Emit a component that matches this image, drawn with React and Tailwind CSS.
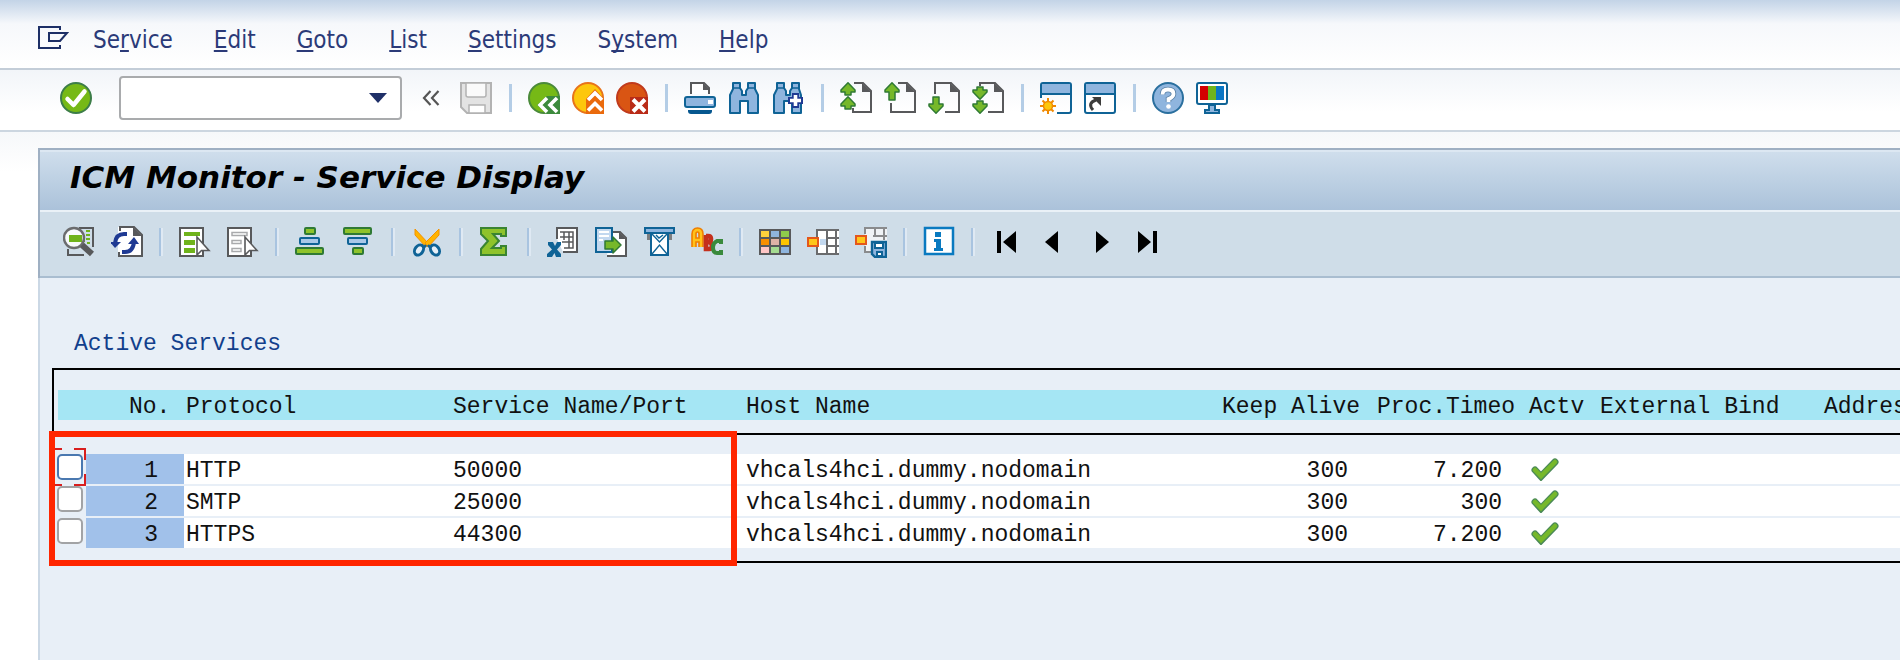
import React from "react";

const Svg = ({ children, w = 32, h = 32 }) => (
  <svg width={w} height={h} viewBox={`0 0 ${w} ${h}`} fill="none" aria-hidden="true" className="block shrink-0">
    {children}
  </svg>
);

const UP = "M8 0.8 L15 8 V10 H11 V13 H5 V10 H1 V8 Z";
const DOWN = "M8 13.2 L15 6 V4 H11 V1 H5 V4 H1 V6 Z";
const green = { fill: "#76b82a", stroke: "#2f7a34", strokeWidth: 1.5, strokeLinejoin: "round" };

const PageOutline = ({ d }) => (
  <>
    <path d={d} stroke="#58595b" strokeWidth="2" />
    <path d="M22 1 L31 10 H22 Z" fill="#58595b" />
  </>
);

const icons = {
  ok: (
    <Svg>
      <circle cx="16" cy="16" r="15" fill="#76b916" stroke="#3c7d48" strokeWidth="2" />
      <path d="M7.5 17 L13.5 23 L24.5 9.5" stroke="#fff" strokeWidth="4.5" strokeLinecap="round" strokeLinejoin="round" />
    </Svg>
  ),
  collapse: (
    <Svg w={20} h={18}>
      <path d="M9.5 2 L3 9 L9.5 16 M17.5 2 L11 9 L17.5 16" stroke="#555" strokeWidth="2.2" />
    </Svg>
  ),
  save: (
    <Svg>
      <path d="M1 1 H31 V31 H7 L1 25 Z" fill="#e3e3e3" stroke="#b3b3b3" strokeWidth="2" />
      <path d="M6 1 H26 V13 Q26 15 24 15 H8 Q6 15 6 13 Z" fill="#fafafa" stroke="#b3b3b3" strokeWidth="1.5" />
      <path d="M9 31 V23 H25 V31 Z" fill="#fff" stroke="#b3b3b3" strokeWidth="1.5" />
    </Svg>
  ),
  back: (
    <Svg>
      <circle cx="16" cy="16" r="15" fill="#76b916" stroke="#4a8a3a" strokeWidth="2" />
      <path d="M9 23 L19 14 H32 V32 H19 Z" fill="#3c8a3c" />
      <path d="M19 16 L12 23 L19 30 M29 16 L22 23 L29 30" stroke="#fff" strokeWidth="3.6" />
    </Svg>
  ),
  exit: (
    <Svg>
      <circle cx="16" cy="16" r="15" fill="#fdc70c" stroke="#e8731a" strokeWidth="2" />
      <path d="M14 17 L23 7 L32 17 V32 H14 Z" fill="#ea6a0c" />
      <path d="M16 18 L23 11 L30 18 M16 28.5 L23 21.5 L30 28.5" stroke="#fff" strokeWidth="3.6" />
    </Svg>
  ),
  cancel: (
    <Svg>
      <circle cx="16" cy="16" r="15" fill="#d95513" stroke="#c03a1c" strokeWidth="2" />
      <path d="M14 15 H32 V32 H14 Z" fill="#b92b17" />
      <path d="M17 17.5 L29 29.5 M29 17.5 L17 29.5" stroke="#fff" strokeWidth="4" />
    </Svg>
  ),
  print: (
    <Svg>
      <path d="M7 12 V1 H20 L25 6 V12" fill="#fff" stroke="#58595b" strokeWidth="2" />
      <path d="M19 1 L26 8 H19 Z" fill="#58595b" />
      <rect x="1" y="15" width="30" height="10" rx="2" fill="#8fb5de" stroke="#0f6396" strokeWidth="2" />
      <rect x="24" y="18" width="5" height="4" fill="#fff" />
      <path d="M4 28 H28 V29 Q28 32 25 32 H7 Q4 32 4 29 Z" fill="#06578f" />
    </Svg>
  ),
  find: (
    <Svg>
      <path d="M5 1 H12 V6 L14 9 V13 H18 V9 L20 6 V1 H27 V7 L30 13 V31 H20 V19 H12 V31 H2 V13 L5 7 Z" fill="#8fb5de" stroke="#0f6396" strokeWidth="2" strokeLinejoin="round" />
      <path d="M5 6 H12 M20 6 H27" stroke="#0f6396" strokeWidth="1.5" />
    </Svg>
  ),
  findNext: (
    <Svg>
      <path d="M5 1 H12 V6 L14 9 V13 H18 V9 L20 6 V1 H27 V7 L29 13 V31 H20 V19 H12 V31 H2 V13 L5 7 Z" fill="#8fb5de" stroke="#0f6396" strokeWidth="2" strokeLinejoin="round" />
      <path d="M5 6 H12 M20 6 H27" stroke="#0f6396" strokeWidth="1.5" />
      <path d="M20 11 H27 V15 H31 V22 H27 V26 H20 V22 H16 V15 H20 Z" fill="#1f3a93" />
      <path d="M23.5 13 V24 M18 18.5 H29" stroke="#fff" strokeWidth="3.6" />
    </Svg>
  ),
  firstPage: (
    <Svg>
      <PageOutline d="M14 1 H23 L31 9 V30 H13 V26" />
      <path d={UP} {...green} />
      <path d={UP} transform="translate(0 14)" {...green} />
    </Svg>
  ),
  prevPage: (
    <Svg>
      <PageOutline d="M14 1 H23 L31 9 V30 H7 V21" />
      <path d="M8 0.8 L15 8 V10 H11 V18 H5 V10 H1 V8 Z" {...green} />
    </Svg>
  ),
  nextPage: (
    <Svg>
      <PageOutline d="M7 12 V1 H23 L31 9 V30 H17" />
      <path d="M8 31.2 L15 24 V22 H11 V15 H5 V22 H1 V24 Z" {...green} />
    </Svg>
  ),
  lastPage: (
    <Svg>
      <PageOutline d="M8 4 V1 H23 L31 9 V30 H16" />
      <path d={DOWN} transform="translate(0 4)" {...green} />
      <path d={DOWN} transform="translate(0 18)" {...green} />
    </Svg>
  ),
  newSession: (
    <Svg>
      <path d="M1 16 V3 Q1 1 3 1 H29 Q31 1 31 3 V29 Q31 31 29 31 H17" stroke="#0f6396" strokeWidth="2" />
      <path d="M2 2 H30 V11 H2 Z" fill="#8fb5de" />
      <path d="M1 12 H31" stroke="#0f6396" strokeWidth="2" />
      <path d="M8 16 V32 M0 24 H16 M2.5 18.5 L13.5 29.5 M13.5 18.5 L2.5 29.5" stroke="#f08a00" strokeWidth="2" />
      <circle cx="8" cy="24" r="4.5" fill="#fdc70c" stroke="#f08a00" strokeWidth="1.5" />
    </Svg>
  ),
  shortcut: (
    <Svg>
      <rect x="1" y="1" width="30" height="30" rx="2" fill="#fff" stroke="#0f6396" strokeWidth="2" />
      <path d="M2 2 H30 V11 H2 Z" fill="#8fb5de" />
      <path d="M1 12 H31" stroke="#0f6396" strokeWidth="2" />
      <path d="M9 28 Q3 21 12 18" stroke="#3c3c3b" strokeWidth="3" />
      <path d="M8 15 H17 V24 Z" fill="#3c3c3b" />
    </Svg>
  ),
  help: (
    <Svg>
      <circle cx="16" cy="16" r="15" fill="#8fb5de" stroke="#2a6f9e" strokeWidth="2" />
      <path d="M10.5 12.5 Q10.5 7.5 16 7.5 Q21.5 7.5 21.5 12 Q21.5 15 16.5 17 V20" stroke="#5b83a8" strokeWidth="5.5" />
      <path d="M10.5 12.5 Q10.5 7.5 16 7.5 Q21.5 7.5 21.5 12 Q21.5 15 16.5 17 V20" stroke="#fff" strokeWidth="3.8" />
      <circle cx="16.5" cy="24.5" r="2.3" fill="#fff" />
    </Svg>
  ),
  layout: (
    <Svg>
      <rect x="1" y="1" width="30" height="21" rx="2" fill="#fff" stroke="#0f6396" strokeWidth="2" />
      <path d="M4 4 H12 V18 H4 Z" fill="#d40000" />
      <path d="M12 4 H20 V18 H12 Z" fill="#6fb31b" />
      <path d="M20 4 H28 V18 H20 Z" fill="#0a76c4" />
      <path d="M13 23 H19 V28 H23 V31 H9 V28 H13 Z" fill="#8fb5de" stroke="#0f6396" strokeWidth="2" />
    </Svg>
  ),
  detail: (
    <Svg>
      <path d="M16 2 H30 V21 M5 23 V29 H21" stroke="#58595b" strokeWidth="2" />
      <path d="M6 9 H22 V16 H6 Z" fill="#6fb31b" />
      <path d="M23 5 H27 M23 9 H27 M23 13 H27 M24 17 H27" stroke="#6fb31b" strokeWidth="2" />
      <circle cx="11" cy="12" r="10" fill="#fff" fillOpacity="0.85" stroke="#6b6c6e" strokeWidth="2.4" />
      <path d="M6 9 H19 V16 H6 Z" fill="#6fb31b" />
      <path d="M19 19 L29 28" stroke="#58595b" strokeWidth="6" />
    </Svg>
  ),
  refresh: (
    <Svg>
      <path d="M7 8 V1 H22 L31 9 V30 H7 V24" fill="#fff" />
      <path d="M9 5 V1 H23 L31 9 V30 H8 V26" stroke="#58595b" strokeWidth="2" />
      <path d="M22 1 L31 10 H22 Z" fill="#58595b" />
      <path d="M4 17 Q5 8 13 8 H16" stroke="#1f3a93" strokeWidth="4" />
      <path d="M-1 16 H10 L4 22 Z" fill="#1f3a93" />
      <path d="M23 16 Q22 26 14 26 H11" stroke="#1f3a93" strokeWidth="4" />
      <path d="M17 18 H28 L23 11 Z" fill="#1f3a93" />
    </Svg>
  ),
  selectAll: (
    <Svg>
      <path d="M1 2 H24 V30 H1 Z" fill="#fff" stroke="#58595b" strokeWidth="2" />
      <path d="M5 6 H21 V10 H5 Z M5 14 H16 V19 H5 Z M5 22 H16 V27 H5 Z" fill="#6fb31b" />
      <path d="M18 11 V29 L22.5 24.5 H30 Z" fill="#fff" stroke="#58595b" strokeWidth="1.6" />
    </Svg>
  ),
  deselectAll: (
    <Svg>
      <path d="M1 2 H24 V30 H1 Z" fill="#fff" stroke="#58595b" strokeWidth="2" />
      <path d="M5 6.5 H20 V9.5 H5 Z M5 14.5 H14 V17.5 H5 Z M5 22.5 H14 V25.5 H5 Z" fill="#fff" stroke="#a9aaac" strokeWidth="1.5" />
      <path d="M18 11 V29 L22.5 24.5 H30 Z" fill="#fff" stroke="#58595b" strokeWidth="1.6" />
    </Svg>
  ),
  sortAsc: (
    <Svg>
      <rect x="10" y="2" width="10" height="6" rx="1" fill="#8fc32b" stroke="#2f7a34" strokeWidth="2" />
      <rect x="5" y="12" width="19" height="6" rx="1" fill="#a9c8e8" stroke="#0f6396" strokeWidth="2" />
      <rect x="1" y="22" width="27" height="6" rx="1" fill="#8fc32b" stroke="#2f7a34" strokeWidth="2" />
    </Svg>
  ),
  sortDesc: (
    <Svg>
      <rect x="1" y="2" width="27" height="6" rx="1" fill="#8fc32b" stroke="#2f7a34" strokeWidth="2" />
      <rect x="5" y="12" width="19" height="6" rx="1" fill="#a9c8e8" stroke="#0f6396" strokeWidth="2" />
      <rect x="10" y="22" width="10" height="6" rx="1" fill="#8fc32b" stroke="#2f7a34" strokeWidth="2" />
    </Svg>
  ),
  cut: (
    <Svg>
      <path d="M4 3 V9 L15 21 L17 17 Z" fill="#ffb400" stroke="#f39200" />
      <path d="M28 3 V9 L17 21 L14 17 Z" fill="#ffb400" stroke="#f39200" />
      <path d="M15 19 L11 24 M17 19 L21 24" stroke="#0f6396" strokeWidth="2.5" />
      <ellipse cx="8" cy="24" rx="4" ry="5.5" transform="rotate(35 8 24)" fill="#e6eff7" stroke="#0f6396" strokeWidth="3" />
      <ellipse cx="24" cy="24" rx="4" ry="5.5" transform="rotate(-35 24 24)" fill="#e6eff7" stroke="#0f6396" strokeWidth="3" />
    </Svg>
  ),
  sum: (
    <Svg>
      <path d="M2 2 H27 V10 H22 V8 H14 L20 15 L13 22 H22 V20 H27 V29 H2 V23 L9 15 L2 8 Z" fill="#8fc32b" stroke="#3a8431" strokeWidth="2" />
    </Svg>
  ),
  excel: (
    <Svg>
      <path d="M10 13 V2 H30 V26 H16" fill="#fff" stroke="#58595b" strokeWidth="2" />
      <path d="M13 6 H26 V22 H17 M13 11 H26 M15 16 H26 M17 6 V14 M22 6 V22" stroke="#58595b" strokeWidth="1.5" />
      <path d="M1 16 H6 L8 20 L10 16 H14 V19 L10 23.5 L14 28 V31 H9 L7.5 27 L5 31 H0 V28 L5 23.5 L1 19 Z" fill="#0f6396" />
    </Svg>
  ),
  exportFile: (
    <Svg>
      <path d="M14 6 H25 L31 12 V30 H12" fill="#fff" stroke="#58595b" strokeWidth="2" />
      <path d="M24 6 L31 13 H24 Z" fill="#58595b" />
      <path d="M1 2 H17 V26 H1 Z" fill="#c2d8ef" stroke="#0f6396" strokeWidth="2" />
      <path d="M4 6 H14 M4 10 H14 M4 14 H8" stroke="#fff" strokeWidth="2" />
      <path d="M10 15 H18 V11 L26 19 L18 27 V23 H10 Z" {...green} />
    </Svg>
  ),
  filter: (
    <Svg>
      <path d="M2 2 H31 V7 H2 Z" fill="#8fb5de" stroke="#0f6396" strokeWidth="2" />
      <path d="M4 8 H8 V14 H4 Z M25 8 H29 V14 H25 Z" fill="#7d7e80" />
      <path d="M8 7 H25 V29 H8 Z" fill="#fff" stroke="#0f6396" strokeWidth="2" />
      <path d="M9 8 L16.5 16 L24 8 M9 28 L16.5 19 L24 28 M13 9 L16 12 L20 9" stroke="#0f6396" strokeWidth="1.4" />
    </Svg>
  ),
  abc: (
    <Svg>
      <path d="M3 21 V8 Q3 4 6.500 4 Q10 4 10 8 V21 M3 14 H10" stroke="#ef7d00" strokeWidth="5.6" />
      <path d="M15 10 H17 Q20 10 20 13 Q20 16 17 16 Q21 16 21 20 Q21 23 18 23 H15 V9" stroke="#c4301c" strokeWidth="4.6" />
      <path d="M3 21 V8 Q3 4 6.500 4 Q10 4 10 8 V21 M3 14 H10" stroke="#ffc21a" strokeWidth="2.4" />
      <path d="M30 18 V15 H26 Q22 17 22 21 Q22 27 26 27 H30 V24" stroke="#3a8a3c" strokeWidth="4" />
    </Svg>
  ),
  grid: (
    <Svg>
      <path d="M0 3 H32 V29 H0 Z" fill="#58595b" />
      <path d="M2 5 H10 V11 H2 Z" fill="#ffd23c" />
      <path d="M12 5 H20 V11 H12 Z" fill="#8fb5de" />
      <path d="M22 5 H30 V11 H22 Z" fill="#8fcb4b" />
      <path d="M2 13 H10 V19 H2 Z" fill="#f88f00" />
      <path d="M12 13 H20 V19 H12 Z" fill="#dfb2a6" />
      <path d="M22 13 H30 V19 H22 Z" fill="#ffc400" />
      <path d="M2 21 H10 V27 H2 Z" fill="#ffc6c6" />
      <path d="M12 21 H20 V27 H12 Z" fill="#a5db91" />
      <path d="M22 21 H30 V27 H22 Z" fill="#8fb5de" />
    </Svg>
  ),
  changeLayout: (
    <Svg>
      <path d="M10 4 H32 V28 H10 Z" fill="#fff" />
      <path d="M10 11 V4 H32 M32 12 H20 M32 20 H20 M10 21 V28 H32 M20 4 V28 M29 4 V28" stroke="#6a6b6d" strokeWidth="2" />
      <path d="M13 13 H19 V19 H13 Z" fill="#c2d8ef" />
      <path d="M1 12 H11 V20 H1 Z" fill="#ffc61a" stroke="#e4571b" strokeWidth="2" />
    </Svg>
  ),
  saveLayout: (
    <Svg>
      <path d="M10 2 H32 V16 H16 V26 H10 Z" fill="#f0f3f6" />
      <path d="M10 8 V2 H32 M32 10 H18 M10 20 V26 H16 M20 2 V10 M29 2 V14" stroke="#8a8b8d" strokeWidth="2" />
      <path d="M1 10 H11 V18 H1 Z" fill="#ffc61a" stroke="#e4571b" strokeWidth="2" />
      <path d="M17 16 H31 V31 H20 L17 28 Z" fill="#8fb5de" stroke="#0f6396" strokeWidth="2.4" />
      <path d="M20 17 H28 V22 H20 Z M22 26 H27 V30 H22 Z" fill="#fff" stroke="#0f6396" strokeWidth="2" />
    </Svg>
  ),
  info: (
    <Svg>
      <path d="M2 2 H30 V28 H2 Z" fill="#fff" stroke="#0a7ac0" strokeWidth="2.5" />
      <path d="M12 6 H18 V11 H12 Z M11 13 H18 V22 H20 V25 H11 V22 H13 V16 H11 Z" fill="#0a7ac0" />
    </Svg>
  ),
  first: (
    <Svg>
      <path d="M6 5 H10 V27 H6 Z M25 5 V27 L12 16 Z" fill="#000" />
    </Svg>
  ),
  prev: (
    <Svg>
      <path d="M23 5 V27 L10 16 Z" fill="#000" />
    </Svg>
  ),
  next: (
    <Svg>
      <path d="M9 5 V27 L22 16 Z" fill="#000" />
    </Svg>
  ),
  last: (
    <Svg>
      <path d="M7 5 V27 L20 16 Z M22 5 H26 V27 H22 Z" fill="#000" />
    </Svg>
  ),
};

const IconButton = ({ icon, label }) => (
  <button type="button" aria-label={label} className="flex h-8 w-8 shrink-0 items-center justify-center">
    {icons[icon]}
  </button>
);

const menus = [
  ["Se", "r", "vice"],
  ["", "E", "dit"],
  ["", "G", "oto"],
  ["", "L", "ist"],
  ["", "S", "ettings"],
  ["S", "y", "stem"],
  ["", "H", "elp"],
];

const systemGroups = [
  [["back", "Back"], ["exit", "Exit"], ["cancel", "Cancel"]],
  [["print", "Print"], ["find", "Find"], ["findNext", "Find next"]],
  [["firstPage", "First page"], ["prevPage", "Previous page"], ["nextPage", "Next page"], ["lastPage", "Last page"]],
  [["newSession", "New session"], ["shortcut", "Create shortcut"]],
  [["help", "Help"], ["layout", "Customize local layout"]],
];

const appGroups = [
  [["detail", "Details"], ["refresh", "Refresh"]],
  [["selectAll", "Select all"], ["deselectAll", "Deselect all"]],
  [["sortAsc", "Sort ascending"], ["sortDesc", "Sort descending"]],
  [["cut", "Cut"]],
  [["sum", "Total"]],
  [["excel", "Spreadsheet"], ["exportFile", "Export to file"], ["filter", "Set filter"], ["abc", "ABC analysis"]],
  [["grid", "Choose layout"], ["changeLayout", "Change layout"], ["saveLayout", "Save layout"]],
  [["info", "Information"]],
];

const services = [
  { no: 1, protocol: "HTTP", port: "50000", host: "vhcals4hci.dummy.nodomain", keep: "300", proc: "7.200" },
  { no: 2, protocol: "SMTP", port: "25000", host: "vhcals4hci.dummy.nodomain", keep: "300", proc: "300" },
  { no: 3, protocol: "HTTPS", port: "44300", host: "vhcals4hci.dummy.nodomain", keep: "300", proc: "7.200" },
];

const MenuBar = () => (
  <nav className="flex h-[70px] items-center border-b-2 border-[#c3cdd8] bg-linear-to-b from-[#c3d4e7] via-[#f6f8fb] via-35% to-white pt-3 pl-[38px]">
    <button type="button" aria-label="System menu" className="mr-6 mb-1">
      <Svg w={31} h={24}>
        <path d="M22 4 V1 H1 V22 H22 V19" stroke="#1d2f66" strokeWidth="2" />
        <path d="M11 7 H29 L22 15 H11 Z" stroke="#1d2f66" strokeWidth="2" />
      </Svg>
    </button>
    <ul className="flex gap-[41px] text-[24px] leading-8 text-[#2b3a78]">
      {menus.map(([before, key, after]) => (
        <li key={before + key + after}>
          <button type="button">
            {before}
            <span className="underline decoration-2 underline-offset-2 [text-decoration-skip-ink:none]">{key}</span>
            {after}
          </button>
        </li>
      ))}
    </ul>
  </nav>
);

const SystemBar = () => (
  <div className="flex h-[62px] items-center gap-3 border-b-2 border-[#ccd6e0] bg-linear-to-b from-[#f2f5f9] to-white to-70% pb-1 pl-[60px]">
    <IconButton icon="ok" label="Enter" />
    <div className="ml-[15px] flex h-[44px] w-[283px] items-center rounded-[4px] border-2 border-[#a9abad] bg-white pr-2">
      <input type="text" aria-label="Command" className="h-full min-w-0 flex-1 px-2 text-[24px] outline-none" />
      <button type="button" aria-label="Command history" className="flex h-6 w-7 items-center justify-center">
        <Svg w={18} h={10}>
          <path d="M0 0 H18 L9 10 Z" fill="#1f3068" />
        </Svg>
      </button>
    </div>
    <button type="button" aria-label="Hide command field" className="flex h-8 w-[34px] items-center justify-center">
      {icons.collapse}
    </button>
    <IconButton icon="save" label="Save" />
    {systemGroups.map((group) => (
      <React.Fragment key={group[0][0]}>
        <span className="flex w-3 justify-center">
          <span className="h-7 w-[3px] bg-[#b4cde6]" />
        </span>
        {group.map(([icon, label]) => (
          <IconButton key={icon} icon={icon} label={label} />
        ))}
      </React.Fragment>
    ))}
  </div>
);

const AppBar = () => (
  <div className="flex h-[68px] items-center gap-4 border-t-2 border-b-2 border-t-[#eaf1f7] border-b-[#a9bdd0] bg-[#cfdde8] pb-1 pl-[23px]">
    {appGroups.map((group) => (
      <React.Fragment key={group[0][0]}>
        {group.map(([icon, label]) => (
          <IconButton key={icon} icon={icon} label={label} />
        ))}
        <span className="h-7 w-1 border-r-2 border-l-2 border-l-[#a9c4e0] border-r-[#dfe9f3]" />
      </React.Fragment>
    ))}
    <div className="flex gap-5">
      <div className="flex gap-3">
        <IconButton icon="first" label="First column" />
        <IconButton icon="prev" label="Column left" />
      </div>
      <div className="flex gap-3">
        <IconButton icon="next" label="Column right" />
        <IconButton icon="last" label="Last column" />
      </div>
    </div>
  </div>
);

const Head = ({ children, label, className = "pl-[2px]" }) => (
  <th scope="col" aria-label={label} className="p-0 pt-5 pb-[13px] font-normal">
    <div className={`h-[30px] overflow-hidden bg-[#a5e6f4] text-left whitespace-nowrap ${className}`}>{children}</div>
  </th>
);

const Cell = ({ children, className = "bg-white pl-[2px]" }) => (
  <td className="p-0">
    <div className={`mb-[2px] h-[30px] whitespace-nowrap ${className}`}>{children}</div>
  </td>
);

const ServiceTable = () => (
  <div className="relative ml-[12px] border-y-2 border-l-2 border-black pb-[11px]">
    <table className="w-full table-fixed border-collapse font-['Liberation_Mono',monospace] text-[23px] leading-[34px] text-[#111]">
      <colgroup>
        <col className="w-[32px]" />
        <col className="w-[98px]" />
        <col className="w-[267px]" />
        <col className="w-[293px]" />
        <col className="w-[476px]" />
        <col className="w-[155px]" />
        <col className="w-[152px]" />
        <col className="w-[71px]" />
        <col className="w-[224px]" />
        <col />
      </colgroup>
      <thead className="border-b-2 border-black">
        <tr>
          <Head label="Select" className="ml-1" />
          <Head className="pl-[43px]">No.</Head>
          <Head>Protocol</Head>
          <Head>Service Name/Port</Head>
          <Head>Host Name</Head>
          <Head>Keep Alive</Head>
          <Head>Proc.Timeo</Head>
          <Head>Actv</Head>
          <Head>External Bind</Head>
          <Head>Address</Head>
        </tr>
      </thead>
      <tbody>
        <tr aria-hidden="true">
          <td colSpan={10} className="h-5 p-0" />
        </tr>
        {services.map((s, i) => (
          <tr key={s.no}>
            <Cell className="relative">
              <input
                type="checkbox"
                aria-label={`Select service ${s.no}`}
                className={`ml-[3px] block h-[26px] w-[26px] appearance-none rounded-[5px] border-2 bg-white ${i === 0 ? "border-[#4a78b0]" : "border-[#a2a3a5]"}`}
              />
              {i === 0 && (
                <span className="pointer-events-none absolute -top-[6px] left-0">
                  <Svg w={32} h={38}>
                    <path d="M0 1 H8 M20 1 H31 V12 M31 26 V37 H20 M8 37 H0" stroke="#d81e1e" strokeWidth="2" />
                  </Svg>
                </span>
              )}
            </Cell>
            <Cell className="bg-[#a1c1ea] pr-[26px] text-right">{s.no}</Cell>
            <Cell>{s.protocol}</Cell>
            <Cell>{s.port}</Cell>
            <Cell>{s.host}</Cell>
            <Cell className="bg-white pr-[27px] text-right">{s.keep}</Cell>
            <Cell className="bg-white pr-[25px] text-right">{s.proc}</Cell>
            <Cell className="bg-white pt-1 pl-1">
              <svg role="img" aria-label="Active" width="28" height="23" viewBox="0 0 28 23" className="block">
                <path d="M4 12 L10 18.5 L24 4" fill="none" stroke="#4b8a57" strokeWidth="7" strokeLinecap="round" />
                <path d="M4 12 L10 18 L24 4" fill="none" stroke="#76b82a" strokeWidth="4.5" strokeLinecap="round" />
              </svg>
            </Cell>
            <Cell />
            <Cell />
          </tr>
        ))}
      </tbody>
    </table>
    <div className="pointer-events-none absolute -bottom-[5px] -left-[5px] h-[135px] w-[688px] border-[6px] border-[#ff2600]" />
  </div>
);

export default function App() {
  return (
    <div className="flex min-h-screen flex-col overflow-hidden bg-white font-['DejaVu_Sans_Condensed','DejaVu_Sans',sans-serif]">
      <MenuBar />
      <SystemBar />
      <main className="flex flex-1 flex-col bg-linear-to-b from-[#f6f8fa] to-white to-[40px] pt-4 pl-[38px]">
        <div className="border-t-2 border-l-2 border-[#9fb0c3]">
          <h1 className="h-[60px] border-t-2 border-[#dce7f2] bg-linear-to-b from-[#cfdeec] to-[#abc2da] pl-[30px] font-['DejaVu_Sans',sans-serif] text-[31px] leading-[50px] font-bold text-black italic">
            ICM Monitor - Service Display
          </h1>
          <AppBar />
        </div>
        <section className="flex-1 border-l-2 border-[#cbd8e5] bg-[#e8eff7] pt-[50px]">
          <h2 className="mb-2 pl-[34px] font-['Liberation_Mono',monospace] text-[23px] leading-8 text-[#123f8c]">
            Active Services
          </h2>
          <ServiceTable />
        </section>
      </main>
    </div>
  );
}
